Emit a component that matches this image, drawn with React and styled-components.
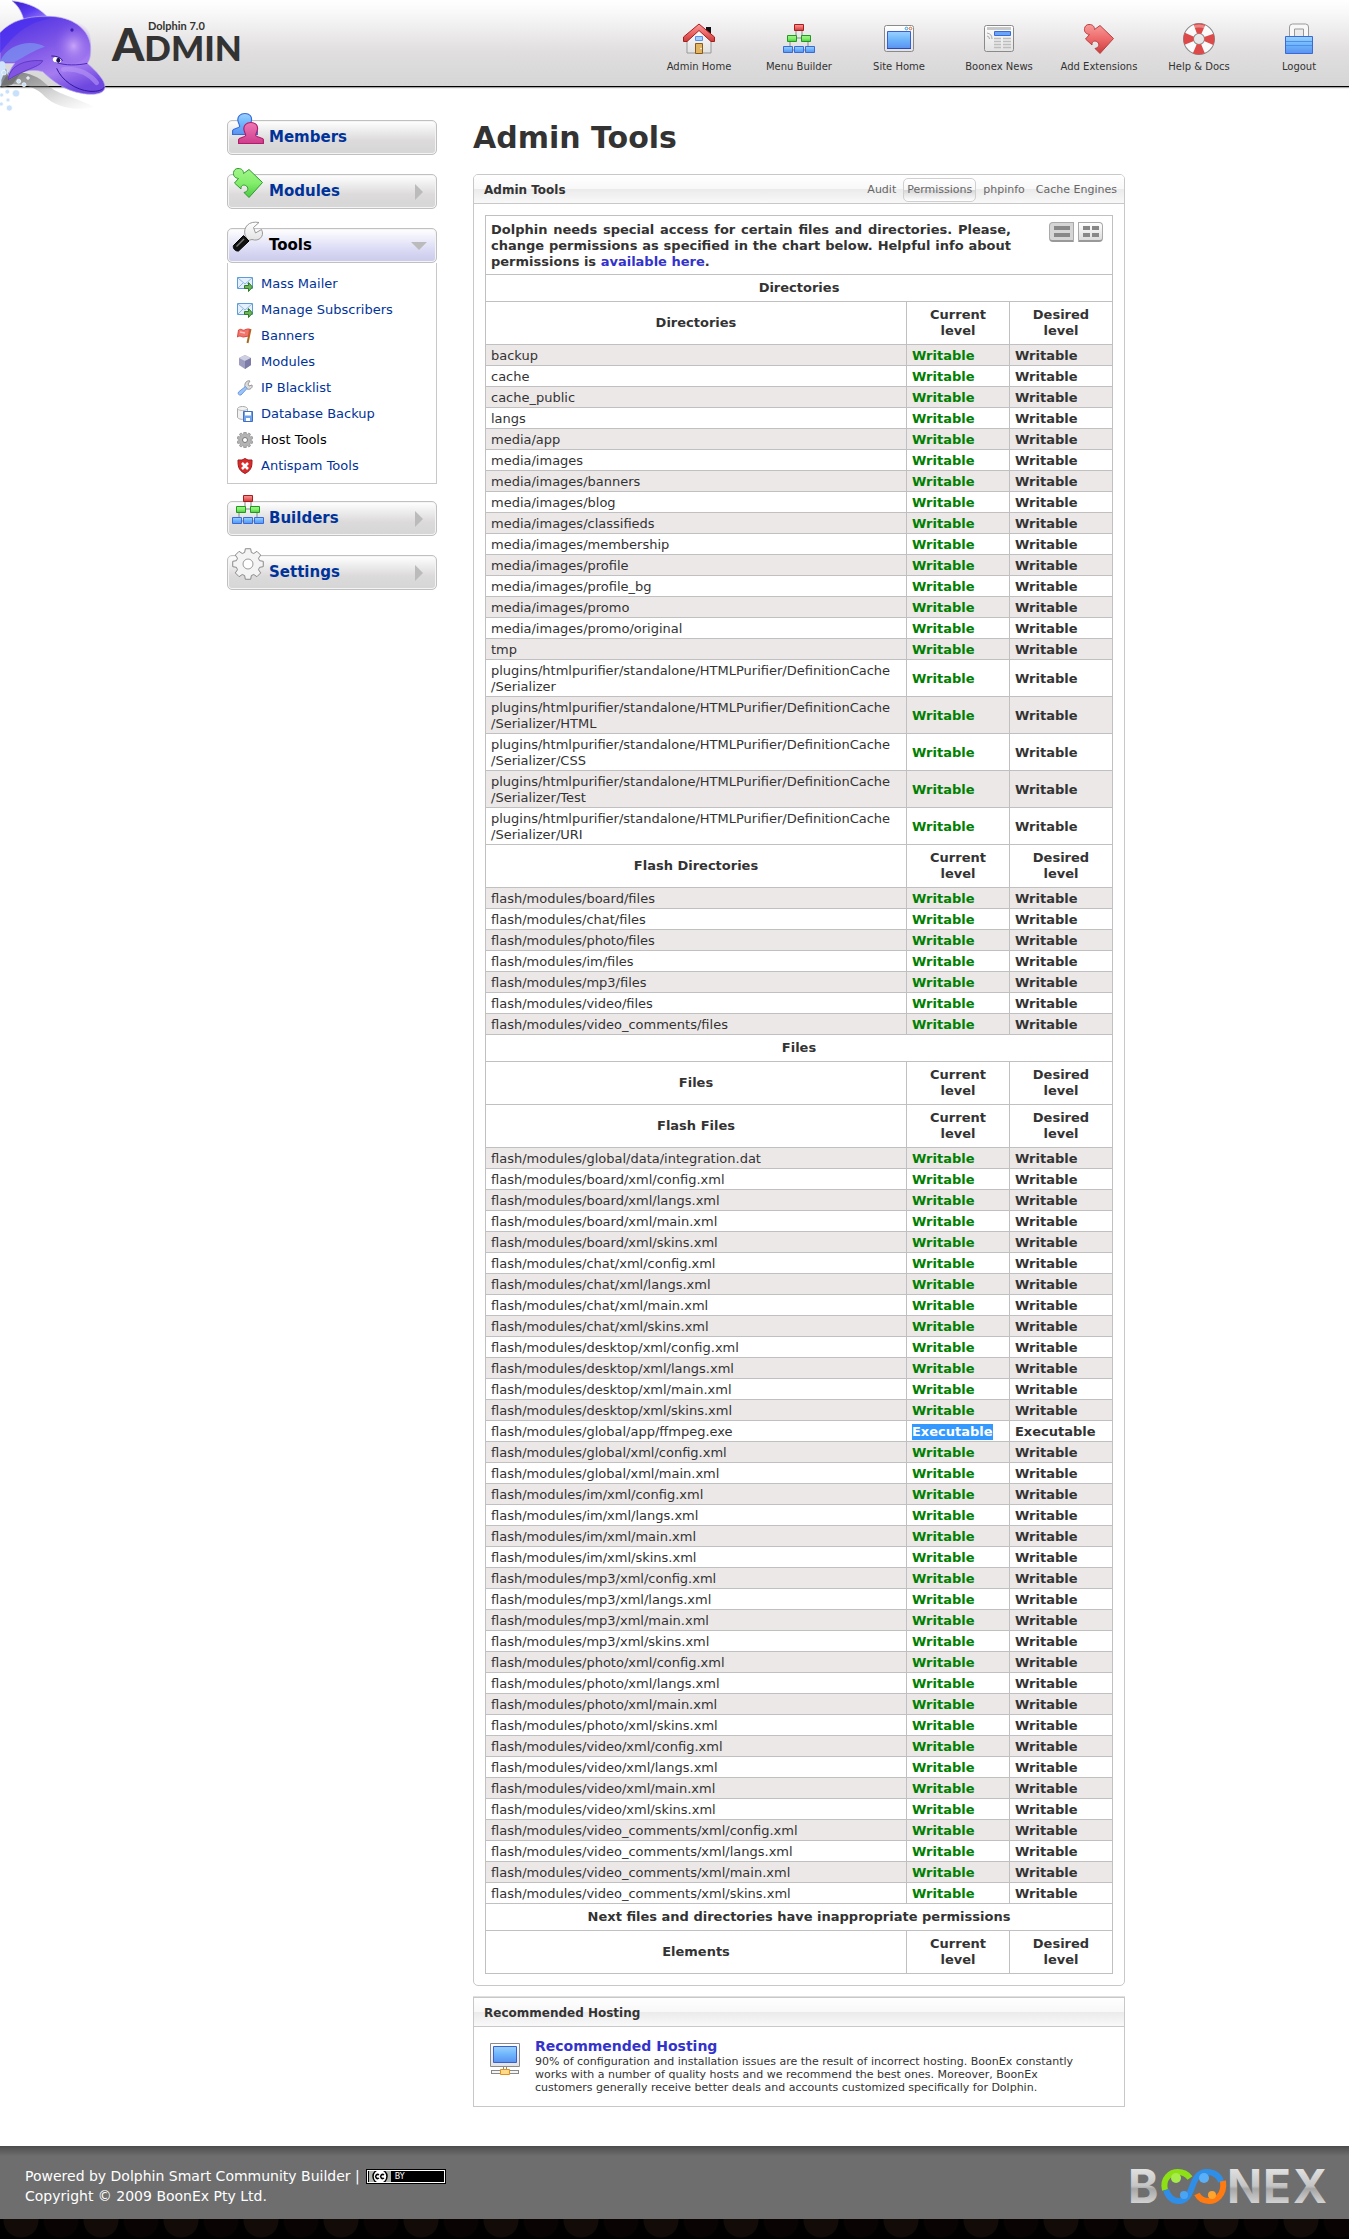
import React from "react";
import styled, { createGlobalStyle, css } from "styled-components";

const GlobalStyle = createGlobalStyle`
  *, *::before, *::after { box-sizing: border-box; }
  body {
    margin: 0;
    background: #fff;
    color: #333;
    font-family: Verdana, "DejaVu Sans", sans-serif;
    font-size: 13px;
    line-height: 16px;
  }
  a { text-decoration: none; }
`;

/* ---------- header ---------- */

const Header = styled.header`
  position: relative;
  display: flex;
  justify-content: space-between;
  height: 87px;
  border-bottom: 1px solid #000;
  background: linear-gradient(#ffffff 0, #fbfafa 10px, #e0dede 52px, #d6d6d6 86px);
  box-shadow: 0 1px 1px #a8a8a8;
`;

const Mascot = styled.svg`
  position: absolute;
  left: 0;
  top: 0;
  width: 107px;
  height: 115px;
`;

const Brand = styled.div`
  display: flex;
  flex-direction: column;
  padding: 20px 0 0 112px;
  font-family: Lato, sans-serif;
  color: #333;
`;

const Version = styled.span`
  margin-left: 36px;
  height: 7px;
  font-size: 11px;
  font-weight: bold;
  line-height: 12px;
`;

const Product = styled.span`
  display: block;
  font-size: 35px;
  font-weight: 900;
  line-height: 34px;
  &::first-letter { font-size: 46px; line-height: 34px; }
`;

const TopNav = styled.nav`
  display: flex;
  padding-top: 23px;
`;

const TopLink = styled.a`
  display: flex;
  flex-direction: column;
  align-items: center;
  gap: 6px;
  width: 100px;
  color: #333;
  font-size: 10px;
  line-height: 12px;
  svg { width: 32px; height: 32px; }
`;

/* ---------- page columns ---------- */

const Columns = styled.div`
  padding: 33px 0 28px 3px;
`;

const ColumnsInner = styled.div`
  display: flex;
  align-items: flex-start;
  gap: 36px;
  max-width: 898px;
  margin: 0 auto;
`;

const Sidebar = styled.nav`
  display: flex;
  flex-direction: column;
  flex: none;
  width: 210px;
`;

const Section = styled.section`
  margin-bottom: ${(p) => (p.$open ? 17 : 19)}px;
`;

const SectionButton = styled.button`
  display: flex;
  align-items: center;
  width: 100%;
  height: 35px;
  padding: 0 9px 0 4px;
  border: 1px solid #c0c0c0;
  border-radius: 5px;
  box-shadow: inset 0 0 0 1px #f4f4f4;
  background: linear-gradient(#ffffff, #dcdada 60%, #d6d6d6);
  color: #003399;
  font: bold 15px/20px Verdana, "DejaVu Sans", sans-serif;
  text-align: left;
  cursor: pointer;
  ${(p) =>
    p.$open &&
    css`
      color: #000;
      background: linear-gradient(#ffffff, #dcdcf6 60%, #c9c9ea);
    `}
  .pic { width: 32px; height: 32px; margin: -18px 5px 0 0; }
  .arrow { width: 16px; height: 16px; }
`;

const SectionTitle = styled.span`
  flex: 1;
  padding-bottom: 2px;
`;

const SubMenu = styled.ul`
  display: flex;
  flex-direction: column;
  gap: 10px;
  margin: 0;
  padding: 13px 9px 9px;
  border: 1px solid #c8c8c8;
  border-top: 0;
  list-style: none;
`;

const SubLink = styled.a`
  display: flex;
  align-items: center;
  gap: 8px;
  color: ${(p) => (p.$current ? "#000" : "#003399")};
  svg { width: 16px; height: 16px; }
`;

const Main = styled.main`
  flex: 1;
  min-width: 0;
`;

const PageTitle = styled.h1`
  margin: 0 0 18px;
  font-size: 30px;
  line-height: 36px;
`;

const Panel = styled.section`
  margin-bottom: 11px;
  border: 1px solid #c8c8c8;
  border-radius: ${(p) => (p.$square ? 0 : 5)}px;
  box-shadow: ${(p) => (p.$square ? "0 -1px 0 #e0e0e0" : "none")};
  overflow: hidden;
`;

const PanelHead = styled.header`
  display: flex;
  align-items: center;
  justify-content: space-between;
  height: 29px;
  padding: 1px 3px 0 10px;
  border-bottom: 1px solid #c8c8c8;
  background: linear-gradient(#ffffff, #f8f8f8 50%, #ebebeb 51%, #f9f9f9);
`;

const PanelTitle = styled.h2`
  margin: 0;
  font-size: 12px;
`;

const Tabs = styled.nav`
  display: flex;
  gap: 3px;
`;

const Tab = styled.a`
  padding: 3px;
  border: 1px solid transparent;
  border-radius: 5px;
  color: #666;
  font-size: 11px;
  ${(p) =>
    p.$current &&
    css`
      border-color: #d0d0d0;
      background: linear-gradient(#ffffff, #f6f6f6 50%, #d8d8d8 52%, #ffffff);
    `}
`;

const PanelBody = styled.div`
  padding: 11px;
`;

/* ---------- permissions table ---------- */

const Table = styled.table`
  width: 100%;
  border-collapse: collapse;
  table-layout: fixed;
  th, td { border: 1px solid #c0c0c0; text-align: left; }
`;

const LevelCol = styled.col`
  width: 103px;
`;

const IntroCell = styled.td`
  padding: 6px 5px 4px;
  font-weight: bold;
`;

const IntroRow = styled.div`
  display: flex;
  justify-content: space-between;
  p { margin: 0; width: 520px; text-align: justify; }
  a { color: #3333cc; }
`;

const Toggle = styled.div`
  display: flex;
  gap: 4px;
  padding-right: 4px;
`;

const ToggleButton = styled.button`
  display: flex;
  justify-content: center;
  align-items: center;
  width: 25px;
  height: 20px;
  padding: 0;
  border: 1px solid #aaa;
  border-bottom: 2px solid #999;
  border-radius: ${(p) => (p.$right ? "0 4px 4px 0" : "4px 0 0 4px")};
  background: ${(p) => (p.$active ? "#d6d6d6" : "linear-gradient(#ffffff, #dcdcdc)")};
  svg { width: 16px; height: 11px; }
`;

const HeadCell = styled.th`
  && { padding: 5px 20px; text-align: center; }
`;

const Row = styled.tr`
  background: ${(p) => (p.$striped ? "#ece8e8" : "#fff")};
`;

const PathCell = styled.td`
  padding: 3px 5px 1px;
`;

const LevelCell = styled.td`
  padding: 3px 5px 1px;
  color: ${(p) => (p.$ok ? "#008000" : "#333")};
  font-weight: bold;
`;

const Selected = styled.mark`
  display: inline-block;
  background: #3399ff;
  color: #fff;
`;

/* ---------- hosting ---------- */

const Hosting = styled.div`
  display: flex;
  gap: 14px;
  padding: 12px 32px 12px 15px;
  svg { flex: none; width: 32px; height: 32px; margin-top: 4px; }
`;

const HostingText = styled.div`
  a { color: #3333cc; font-size: 14px; font-weight: bold; line-height: 14px; }
  p { margin: 0; font-size: 11px; line-height: 13px; }
`;

/* ---------- footer ---------- */

const Footer = styled.footer`
  display: flex;
  justify-content: space-between;
  align-items: center;
  height: 73px;
  padding: 7px 20px 0 25px;
  background: linear-gradient(#4c4c4c, #6e6e6e 10px);
  color: #fff;
  font-size: 14px;
  line-height: 20px;
`;

const Credits = styled.div`
  p { display: flex; align-items: center; gap: 6px; margin: 0; }
`;

const License = styled.a`
  display: flex;
  align-items: center;
  width: 80px;
  height: 15px;
  padding-left: 2px;
  border: 1px solid #000;
  outline: 1px solid #fff;
  outline-offset: -2px;
  background: #000;
  color: #fff;
  font-size: 8px;
  line-height: 13px;
  svg { width: 26px; height: 11px; }
`;

const Boonex = styled.svg`
  width: 200px;
  height: 40px;
  overflow: visible;
`;

const Dots = styled.div`
  height: 20px;
  background:
    radial-gradient(circle 18px at 21px 1px, #120b08 17px, transparent 18px) 0 0 / 80px 20px,
    radial-gradient(circle 18px at 61px 1px, #090403 17px, transparent 18px) 0 0 / 80px 20px,
    #000;
`;

/* ---------- drawings ---------- */

const Defs = () => (
  <svg width="0" height="0" style={{ position: "absolute" }} aria-hidden="true">
    <defs>
      <linearGradient id="blue" x2="0" y2="1">
        <stop offset="0" stopColor="#9ad2ff" />
        <stop offset=".5" stopColor="#6db4fb" />
        <stop offset="1" stopColor="#5a92f0" />
      </linearGradient>
      <linearGradient id="red" x2="0" y2="1">
        <stop offset="0" stopColor="#f79a9a" />
        <stop offset=".5" stopColor="#ee6a6a" />
        <stop offset="1" stopColor="#c93c3c" />
      </linearGradient>
      <linearGradient id="green" x2="0" y2="1">
        <stop offset="0" stopColor="#a2f58c" />
        <stop offset=".5" stopColor="#84ee6c" />
        <stop offset="1" stopColor="#4cc943" />
      </linearGradient>
      <linearGradient id="pink" x2="0" y2="1">
        <stop offset="0" stopColor="#ee79b5" />
        <stop offset="1" stopColor="#cf3d8c" />
      </linearGradient>
      <linearGradient id="pale" x2="0" y2="1">
        <stop offset="0" stopColor="#ffffff" />
        <stop offset="1" stopColor="#e2e2e2" />
      </linearGradient>
      <linearGradient id="chrome" x2="0" y2="1">
        <stop offset="0" stopColor="#f2f2f2" />
        <stop offset=".5" stopColor="#c4c4c4" />
        <stop offset=".55" stopColor="#a6a6a6" />
        <stop offset="1" stopColor="#f4f4f4" />
      </linearGradient>
    </defs>
  </svg>
);

const Dolphin = () => (
  <Mascot viewBox="0 0 321 345" aria-hidden="true">
    <defs>
      <linearGradient id="skin" x1=".1" y1="0" x2=".6" y2="1">
        <stop offset="0" stopColor="#4a2fe6" />
        <stop offset=".4" stopColor="#7a52e6" />
        <stop offset=".75" stopColor="#a57cf0" />
        <stop offset="1" stopColor="#6f48e0" />
      </linearGradient>
      <radialGradient id="brow" cx=".55" cy=".6" r=".55">
        <stop offset="0" stopColor="#c8a4f8" />
        <stop offset="1" stopColor="#7c53e6" stopOpacity="0" />
      </radialGradient>
      <linearGradient id="shade" x2="1" y2="1">
        <stop offset="0" stopColor="#555" stopOpacity=".75" />
        <stop offset="1" stopColor="#aaa" stopOpacity="0" />
      </linearGradient>
      <linearGradient id="fin" x2="1" y2="1">
        <stop offset="0" stopColor="#3a1fc8" />
        <stop offset=".5" stopColor="#5a3cf2" />
        <stop offset="1" stopColor="#a98af5" />
      </linearGradient>
    </defs>
    <path d="M0 222 C40 210 95 215 130 245 C170 285 225 290 285 322 C220 335 165 318 135 290 C105 258 60 245 0 258Z" fill="url(#shade)" />
    <path d="M36 2 C85 8 125 25 150 60 L72 62 C66 38 57 20 36 2Z" fill="url(#fin)" stroke="#c4bdf4" strokeWidth="2" />
    <path d="M0 98 C40 55 100 45 165 50 C225 56 268 92 272 140 C273 165 270 180 262 190 C290 215 315 240 315 262 C313 282 285 286 250 281 C190 272 155 240 128 215 C90 205 55 215 24 240 C24 220 32 205 44 190 L0 190Z" fill="url(#skin)" stroke="#b9b0f0" strokeWidth="2" />
    <path d="M0 100 C40 60 90 52 150 56 C100 62 50 90 0 160Z" fill="#4a2ff0" opacity=".7" />
    <path d="M0 185 C20 135 90 115 135 140 C105 150 80 165 44 186Z" fill="#7a8df0" opacity=".8" />
    <ellipse cx="215" cy="125" rx="58" ry="66" fill="url(#brow)" />
    <path d="M24 240 C28 205 60 178 128 182 C122 200 80 205 24 240Z" fill="#8154e4" stroke="#4a2bb8" strokeWidth="2" />
    <path d="M165 186 C195 198 235 196 262 190" fill="none" stroke="#4a2bc0" strokeWidth="3" />
    <path d="M170 205 C185 240 225 270 270 274 C295 275 308 270 312 262" fill="none" stroke="#2f1a9c" strokeWidth="3" />
    <path d="M190 208 C225 205 262 215 290 248" fill="none" stroke="#b796f6" strokeWidth="14" strokeLinecap="round" opacity=".6" />
    <ellipse cx="171" cy="180" rx="13" ry="8" fill="#fff" transform="rotate(18 171 180)" />
    <ellipse cx="175" cy="181" rx="6" ry="8" fill="#20144e" />
    <path d="M154 168 C165 168 180 170 188 182" fill="none" stroke="#2f1a8c" strokeWidth="3" />
    <circle cx="216" cy="90" r="5" fill="#3c1fb0" />
    <path d="M0 185 C12 180 20 190 14 200 C26 205 30 222 16 232 L0 262Z" fill="#cfe4fa" />
    <path d="M4 240 L18 205 L26 240 L60 222 L36 254 L4 264Z" fill="#666" opacity=".7" />
    {[[48, 280, 11], [22, 275, 7], [24, 300, 6], [28, 324, 9], [5, 285, 6], [4, 312, 6], [56, 244, 6], [72, 254, 6], [12, 218, 7], [84, 234, 4]].map(([x, y, r]) => (
      <circle key={`${x}-${y}`} cx={x} cy={y} r={r} fill="#c9e0fa" stroke="#fff" strokeWidth="2" />
    ))}
  </Mascot>
);

const HomeIcon = () => (
  <svg viewBox="0 0 32 32">
    <path d="M23 4h5v10l-5-5z" fill="#111" />
    <path d="M4 16 16 4l12 12v14H4z" fill="url(#pale)" stroke="#999" />
    <path d="M16 1 .5 14v4.500h3.500L16 7.500 28 18.500h3.500V14z" fill="url(#red)" stroke="#a81c1c" />
    <path d="M12.500 13.500h7v4h-7z" fill="#a8d0ff" stroke="#5a92f0" />
    <path d="M12.500 20.500h7v10h-7z" fill="#e0b460" stroke="#8a5a14" />
    <circle cx="18" cy="25.500" r=".8" fill="#fff" />
  </svg>
);

const TreeIcon = (props) => (
  <svg viewBox="0 0 32 32" {...props}>
    <path d="M16 15H9M16 15h9M7 16v10M25 16v10M4 27h24M13 7v8M19 7v8" stroke="#888" fill="none" />
    <path d="M11.500 1.500h9v6h-9z" fill="url(#red)" stroke="#a81c1c" />
    <path d="M4.500 12.500h9v6h-9zM18.500 12.500h9v6h-9z" fill="url(#green)" stroke="#1f9a1f" />
    <path d="M.5 23.500h9v6h-9zM11.500 23.500h9v6h-9zM22.500 23.500h9v6h-9z" fill="url(#blue)" stroke="#3a6ad8" />
  </svg>
);

const WindowIcon = () => (
  <svg viewBox="0 0 32 32">
    <rect x="1.500" y="2.500" width="29" height="26" rx="2" fill="url(#pale)" stroke="#8a8a8a" />
    <path d="M4.500 8.500h23v17h-23z" fill="url(#blue)" stroke="#3a5fd0" />
    <path d="M4 25.500h24" stroke="#2b48b4" />
    <circle cx="23.500" cy="5.500" r="1.300" fill="#fff" stroke="#3a9ad8" />
    <circle cx="27.500" cy="5.500" r="1.300" fill="#fff" stroke="#d86a3a" />
  </svg>
);

const NewsIcon = () => (
  <svg viewBox="0 0 32 32">
    <rect x="1.500" y="2.500" width="29" height="26" rx="2" fill="url(#pale)" stroke="#8a8a8a" />
    <path d="M4 5.500h24" stroke="#c8c8c8" strokeWidth="3" />
    <path d="M11.500 8.500h16v4h-16z" fill="#6aa6f5" stroke="#3a6ad8" />
    <path d="M11 15.500h7M20 15.500h8M11 18.500h7M20 18.500h8M11 21.500h7M20 21.500h8M11 24.500h7M20 24.500h8" stroke="#bdbdbd" strokeWidth="1.500" />
    <path d="M4 10a6 6 0 0 1 5 6M4 13a3 3 0 0 1 2.500 3" fill="none" stroke="#aaa" />
  </svg>
);

const PuzzleIcon = ({ tone, edge, ...rest }) => (
  <svg viewBox="0 0 32 32" {...rest}>
    <path
      d="M6 1.500c4 0 5.500 2 5.500 5L17 2.500 30.500 15.500 17 30.500 12 25.500c4-1 5-4 2.500-6.500-3-2-6-.5-5.500 3L2.500 16l4-4.500C3 11 1 9 1.500 5.500 2 3 3.500 1.500 6 1.500z"
      fill={`url(#${tone})`}
      stroke={edge}
    />
  </svg>
);

const RingIcon = () => (
  <svg viewBox="0 0 32 32">
    <circle cx="16" cy="16" r="10.500" fill="none" stroke="#888" strokeWidth="11" />
    <circle cx="16" cy="16" r="10.500" fill="none" stroke="#fafafa" strokeWidth="9" />
    <circle cx="16" cy="16" r="10.500" fill="none" stroke="#dc4a4a" strokeWidth="10" strokeDasharray="8.250 8.243" strokeDashoffset="4.120" />
    <path d="M5 9a13 13 0 0 1 22 0" fill="none" stroke="#fff" opacity=".35" strokeWidth="3" />
  </svg>
);

const LockIcon = () => (
  <svg viewBox="0 0 32 32">
    <path d="M6.500 14V4a3 3 0 0 1 3-3h13a3 3 0 0 1 3 3v10h-5V6h-9v8z" fill="#f8f8f8" stroke="#999" />
    <path d="M2.500 13.500h27v17h-27z" fill="url(#blue)" stroke="#3a6ad8" />
    <path d="M3 18.500h26M3 22.500h26" stroke="#4f8fe8" />
  </svg>
);

const person = "M11 .5c4 0 6 3 5.500 7-.3 2.500-1.500 4-1.500 6 0 1.500 6 2 6.500 4v4H.5v-4c.5-2 6-2.500 6-4 0-2-1.200-3.500-1.500-6-.5-4 2-7 6-7z";

const MembersIcon = (props) => (
  <svg viewBox="0 0 32 32" {...props}>
    <path d={person} transform="scale(1.180 1)" fill="url(#blue)" stroke="#3a6ad8" />
    <path d={person} transform="translate(6 9)scale(1.180 1)" fill="url(#pink)" stroke="#b01f6c" />
  </svg>
);

const ToolsIcon = (props) => (
  <svg viewBox="0 0 32 32" {...props}>
    <path d="M13 14C11 6 17-.5 27 1.500L21.500 6.500l2 5.500 6-3.500C33 15 27 21 20 18.500l-4 1z" fill="url(#pale)" stroke="#999" />
    <path d="M11.500 14.500 1.500 24.500c-1 3 2 6 5 5.500L17 20z" fill="#111" stroke="#000" />
    <path d="M12 18 4.500 25.500" stroke="#777" strokeWidth="1.500" />
  </svg>
);

const gearPath = (teeth, outer, inner, c) => {
  const step = (Math.PI * 2) / teeth;
  const pts = [];
  for (let i = 0; i < teeth; i += 1) {
    [[-0.36, inner], [-0.22, outer], [0.22, outer], [0.36, inner]].forEach(([t, r]) => {
      const a = (i + t) * step;
      pts.push(`${(c + r * Math.sin(a)).toFixed(2)} ${(c - r * Math.cos(a)).toFixed(2)}`);
    });
  }
  return `M${pts.join("L")}Z`;
};

const GearIcon = (props) => (
  <svg viewBox="0 0 32 32" {...props}>
    <path d={gearPath(8, 15.5, 12, 16)} fill="#f4f4f4" stroke="#8a8a8a" strokeLinejoin="round" />
    <circle cx="16" cy="16" r="5" fill="#fff" stroke="#999" />
  </svg>
);

const RightArrow = () => (
  <svg className="arrow" viewBox="0 0 16 16"><path d="M4 0l8 8-8 8z" fill="#bbb" /></svg>
);

const DownArrow = () => (
  <svg className="arrow" viewBox="0 0 16 16"><path d="M0 4h16l-8 8z" fill="#bbb" /></svg>
);

const MailIcon = () => (
  <svg viewBox="0 0 16 16">
    <path d="M.5 1.500h15v11H.5z" fill="#e4f1fd" stroke="#5f9bd8" />
    <path d="M1 2l7 6 7-6M1 12l5-5M15 12l-5-5" fill="none" stroke="#8fb8e0" />
    <path d="M7.500 9.500h4v-3l4 4.500-4 4.500v-3h-4z" fill="#6ab558" stroke="#2f7a28" />
  </svg>
);

const FlagIcon = () => (
  <svg viewBox="0 0 16 16">
    <path d="M13.500 1 10.500 15" stroke="#a86a1c" strokeWidth="2" />
    <path d="M1.500 2c3-2 4 1 6 0s3-1 5-1l-1 7c-2 0-3 1-5 1S3 7 .5 9z" fill="#f2746a" stroke="#d8463e" />
    <path d="M3 4l5 1" stroke="#ffc0b8" strokeWidth="1.500" />
  </svg>
);

const CubeIcon = () => (
  <svg viewBox="0 0 16 16">
    <path d="M8 1l6 3v7l-6 4-6-4V4z" fill="#9d9dc0" />
    <path d="M8 1l6 3-6 3-6-3z" fill="#cfcfe2" />
    <path d="M8 7l6-3v7l-6 4z" fill="#7c7ca6" />
  </svg>
);

const WrenchIcon = () => (
  <svg viewBox="0 0 16 16">
    <path d="M8 7c-1-4 2-7 5-6l-2 3 1 2 3-1c1 3-2 5-5 4z" fill="#ddd" stroke="#999" />
    <path d="M8.500 6.500 1.500 12c-1 2 .5 3.500 2.500 3l6-6.500z" fill="#9cc4f8" stroke="#6a9ae4" />
  </svg>
);

const BackupIcon = () => (
  <svg viewBox="0 0 16 16">
    <path d="M.5 2.500C2-.2 9-.2 10.500 2.500v9c-2 2.500-8 2.500-10 0z" fill="#f2f2f2" stroke="#aaa" />
    <path d="M.5 3c2 2 8 2 10 0" fill="none" stroke="#bbb" />
    <path d="M6.500 5.500h9v10h-9z" fill="#6fa2e8" stroke="#3f6fc4" />
    <path d="M8 6h6v3.500H8zM9 12h4v3H9z" fill="#fff" />
  </svg>
);

const SmallGearIcon = () => (
  <svg viewBox="0 0 16 16">
    <path d={gearPath(10, 8, 6, 8)} fill="#b4b4b4" stroke="#8a8a8a" strokeWidth=".7" />
    <circle cx="8" cy="8" r="2.500" fill="#fff" stroke="#777" />
  </svg>
);

const ShieldIcon = () => (
  <svg viewBox="0 0 16 16">
    <path d="M8 .5l3 1.500h4c0 6 0 10-7 13.500C1 12 1 8 1 2h4z" fill="#d82c2c" stroke="#9c1c1c" />
    <path d="M5 5l6 6M11 5l-6 6" stroke="#fff" strokeWidth="2.500" />
  </svg>
);

const HostIcon = () => (
  <svg viewBox="0 0 32 32">
    <path d="M1.500.5h29v23h-29z" fill="url(#pale)" stroke="#8a8a8a" />
    <path d="M4.500 3.500h23v16h-23z" fill="url(#blue)" stroke="#3a5fd0" />
    <path d="M14.500 24v3M17.500 24v3" stroke="#888" />
    <rect x="2.500" y="27.500" width="27" height="3" fill="#f4f4f4" stroke="#888" />
    <path d="M11.500 26.500h9v5h-9z" fill="#ffd98a" stroke="#e0901c" />
  </svg>
);

const BoonexLogo = () => (
  <Boonex viewBox="0 0 200 40" role="img" aria-label="BOONEX">
    <g fill="url(#chrome)" fontFamily="Inter, sans-serif" fontWeight="700" fontSize="46">
      <text x="-1" y="37">B</text>
      <text x="98" y="37">N</text>
      <text x="134" y="37">E</text>
      <text x="164" y="37">X</text>
    </g>
    <g fill="none" strokeWidth="6">
      <path d="M36 24C33 12 42 6 49 6C54 6 58 8 61 12" stroke="#8ee016" />
      <path d="M37 24C40 33 46 35 50 35C66 35 60 6 78 6C86 6 91 11 92 16" stroke="#2f8fe8" />
      <path d="M94 15C96 30 86 35 80 35C74 35 70 32 68 28" stroke="#ff7a10" />
    </g>
    <circle cx="47" cy="12" r="5" fill="#a6ec4a" />
    <circle cx="55" cy="29" r="4" fill="#4aa4f4" />
    <circle cx="75" cy="12" r="5" fill="#5ab0f8" />
    <circle cx="83" cy="29" r="4" fill="#ffa42c" />
  </Boonex>
);

/* ---------- data ---------- */

const topLinks = [
  ["Admin Home", <HomeIcon />],
  ["Menu Builder", <TreeIcon />],
  ["Site Home", <WindowIcon />],
  ["Boonex News", <NewsIcon />],
  ["Add Extensions", <PuzzleIcon tone="red" edge="#b84040" />],
  ["Help & Docs", <RingIcon />],
  ["Logout", <LockIcon />],
];

const toolLinks = [
  ["Mass Mailer", MailIcon],
  ["Manage Subscribers", MailIcon],
  ["Banners", FlagIcon],
  ["Modules", CubeIcon],
  ["IP Blacklist", WrenchIcon],
  ["Database Backup", BackupIcon],
  ["Host Tools", SmallGearIcon],
  ["Antispam Tools", ShieldIcon],
];

const serializer = "plugins/htmlpurifier/standalone/HTMLPurifier/DefinitionCache|/Serializer";

const directories = [
  "backup", "cache", "cache_public", "langs", "media/app", "media/images",
  "media/images/banners", "media/images/blog", "media/images/classifieds",
  "media/images/membership", "media/images/profile", "media/images/profile_bg",
  "media/images/promo", "media/images/promo/original", "tmp",
  serializer, `${serializer}/HTML`, `${serializer}/CSS`, `${serializer}/Test`, `${serializer}/URI`,
];

const flashDirectories = ["board", "chat", "photo", "im", "mp3", "video", "video_comments"].map(
  (m) => `flash/modules/${m}/files`
);

const xmlFiles = (module, names) => names.map((n) => `flash/modules/${module}/xml/${n}.xml`);
const full = ["config", "langs", "main", "skins"];

const flashFiles = [
  "flash/modules/global/data/integration.dat",
  ...xmlFiles("board", full),
  ...xmlFiles("chat", full),
  ...xmlFiles("desktop", full),
  "flash/modules/global/app/ffmpeg.exe",
  ...xmlFiles("global", ["config", "main"]),
  ...["im", "mp3", "photo", "video", "video_comments"].flatMap((m) => xmlFiles(m, full)),
];

/* ---------- parts ---------- */

const MenuSection = ({ title, Icon, iconProps, arrow, open, children }) => (
  <Section $open={open}>
    <SectionButton type="button" $open={open}>
      <Icon className="pic" {...iconProps} />
      <SectionTitle>{title}</SectionTitle>
      {arrow && (open ? <DownArrow /> : <RightArrow />)}
    </SectionButton>
    {children}
  </Section>
);

const GroupRow = ({ children }) => (
  <tr>
    <HeadCell colSpan={3}>{children}</HeadCell>
  </tr>
);

const ColumnRow = ({ name }) => (
  <tr>
    <HeadCell>{name}</HeadCell>
    <HeadCell>Current level</HeadCell>
    <HeadCell>Desired level</HeadCell>
  </tr>
);

const FileRows = ({ paths }) =>
  paths.map((path, i) => {
    const executable = path.endsWith(".exe");
    const [head, tail] = path.split("|");
    return (
      <Row key={path} $striped={i % 2 === 0}>
        <PathCell>
          {head}
          {tail && <><br />{tail}</>}
        </PathCell>
        <LevelCell $ok>{executable ? <Selected>Executable</Selected> : "Writable"}</LevelCell>
        <LevelCell>{executable ? "Executable" : "Writable"}</LevelCell>
      </Row>
    );
  });

export default function App() {
  return (
    <>
      <GlobalStyle />
      <Defs />
      <Header>
        <Brand>
          <Version>Dolphin 7.0</Version>
          <Product>ADMIN</Product>
        </Brand>
        <TopNav>
          {topLinks.map(([label, icon]) => (
            <TopLink key={label} href="#">
              {icon}
              {label}
            </TopLink>
          ))}
        </TopNav>
        <Dolphin />
      </Header>

      <Columns>
        <ColumnsInner>
          <Sidebar>
            <MenuSection title="Members" Icon={MembersIcon} />
            <MenuSection title="Modules" Icon={PuzzleIcon} iconProps={{ tone: "green", edge: "#2f9a2f" }} arrow />
            <MenuSection title="Tools" Icon={ToolsIcon} arrow open>
              <SubMenu>
                {toolLinks.map(([label, Icon]) => (
                  <li key={label}>
                    <SubLink href="#" $current={label === "Host Tools"}>
                      <Icon />
                      {label}
                    </SubLink>
                  </li>
                ))}
              </SubMenu>
            </MenuSection>
            <MenuSection title="Builders" Icon={TreeIcon} arrow />
            <MenuSection title="Settings" Icon={GearIcon} arrow />
          </Sidebar>

          <Main>
            <PageTitle>Admin Tools</PageTitle>
            <Panel>
              <PanelHead>
                <PanelTitle>Admin Tools</PanelTitle>
                <Tabs>
                  {["Audit", "Permissions", "phpinfo", "Cache Engines"].map((t) => (
                    <Tab key={t} href="#" $current={t === "Permissions"}>{t}</Tab>
                  ))}
                </Tabs>
              </PanelHead>
              <PanelBody>
                <Table>
                  <colgroup>
                    <col />
                    <LevelCol />
                    <LevelCol />
                  </colgroup>
                  <tbody>
                    <tr>
                      <IntroCell colSpan={3}>
                        <IntroRow>
                          <p>
                            Dolphin needs special access for certain files and directories. Please, change
                            permissions as specified in the chart below. Helpful info about permissions is{" "}
                            <a href="#">available here</a>.
                          </p>
                          <Toggle>
                            <ToggleButton type="button" $active aria-label="List view">
                              <svg viewBox="0 0 16 11"><path d="M0 0h16v4H0zM0 7h16v4H0z" fill="#888" /></svg>
                            </ToggleButton>
                            <ToggleButton type="button" $right aria-label="Grid view">
                              <svg viewBox="0 0 16 11"><path d="M0 0h7v4H0zM9 0h7v4H9zM0 7h7v4H0zM9 7h7v4H9z" fill="#888" /></svg>
                            </ToggleButton>
                          </Toggle>
                        </IntroRow>
                      </IntroCell>
                    </tr>
                    <GroupRow>Directories</GroupRow>
                    <ColumnRow name="Directories" />
                    <FileRows paths={directories} />
                    <ColumnRow name="Flash Directories" />
                    <FileRows paths={flashDirectories} />
                    <GroupRow>Files</GroupRow>
                    <ColumnRow name="Files" />
                    <ColumnRow name="Flash Files" />
                    <FileRows paths={flashFiles} />
                    <GroupRow>Next files and directories have inappropriate permissions</GroupRow>
                    <ColumnRow name="Elements" />
                  </tbody>
                </Table>
              </PanelBody>
            </Panel>

            <Panel $square>
              <PanelHead>
                <PanelTitle>Recommended Hosting</PanelTitle>
              </PanelHead>
              <Hosting>
                <HostIcon />
                <HostingText>
                  <a href="#">Recommended Hosting</a>
                  <p>
                    90% of configuration and installation issues are the result of incorrect hosting. BoonEx
                    constantly works with a number of quality hosts and we recommend the best ones. Moreover,
                    BoonEx customers generally receive better deals and accounts customized specifically for
                    Dolphin.
                  </p>
                </HostingText>
              </Hosting>
            </Panel>
          </Main>
        </ColumnsInner>
      </Columns>

      <Footer>
        <Credits>
          <p>
            Powered by Dolphin Smart Community Builder |
            <License href="#" aria-label="Creative Commons Attribution">
              <svg viewBox="0 0 26 11">
                <path d="M0 0h22v11H0z" fill="#b0b5ae" />
                <circle cx="11" cy="5.500" r="7" fill="#fff" stroke="#000" strokeWidth="1.500" />
                <path d="M10 4a2 2 0 1 0 0 3M15 4a2 2 0 1 0 0 3" fill="none" stroke="#000" strokeWidth="1.500" />
              </svg>
              BY
            </License>
          </p>
          <p>Copyright © 2009 BoonEx Pty Ltd.</p>
        </Credits>
        <BoonexLogo />
      </Footer>
      <Dots />
    </>
  );
}
